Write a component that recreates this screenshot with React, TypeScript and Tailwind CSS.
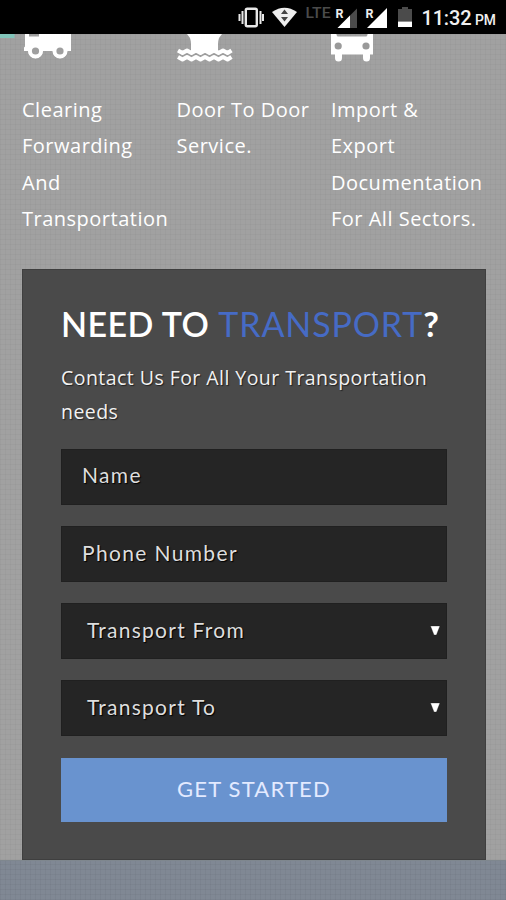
import React from 'react';

const services = [
  { icon: <TruckIcon />, lines: ['Clearing', 'Forwarding', 'And', 'Transportation'] },
  { icon: <ShipIcon />, lines: ['Door To Door', 'Service.'] },
  { icon: <BusIcon />, lines: ['Import &', 'Export', 'Documentation', 'For All Sectors.'] },
];

function TruckIcon() {
  return (
    <svg width="72" height="34" viewBox="0 0 72 34" className="-ml-[22px] block">
      <path fill="#81c4b9" d="M0 0h14.500v4H0z" />
      <path
        fill="#fff"
        fillRule="evenodd"
        d="M25 0h46v17h-3.500a7.500 7.500 0 0 1-15 0h-9.500a7.500 7.500 0 0 1-15 0H24v-3.500l1-1zM29 0v2.500h10V0z"
      />
      <circle cx="35.500" cy="17" r="7.200" fill="#fff" />
      <circle cx="60" cy="17" r="7.200" fill="#fff" />
      <circle cx="35.500" cy="17" r="3.600" fill="#9f9f9f" />
      <circle cx="60" cy="17" r="3.600" fill="#9f9f9f" />
    </svg>
  );
}

function ShipIcon() {
  return (
    <svg width="56" height="34" viewBox="0 0 56 34" className="block">
      <path fill="#fff" d="M10 0h35l-3 4q-1 3-1 6v7H14v-7q0-3-1-6z" />
      <path
        fill="none"
        stroke="#fff"
        strokeWidth="4.200"
        strokeLinejoin="round"
        d="M1 16.500l4.500 2.500 4.500-2.500 4.500 2.500 4.500-2.500 4.500 2.500 4.500-2.500 4.500 2.500 4.500-2.500 4.500 2.500 4.500-2.500 4.500 2.500 4-2.500M1 23l4.500 2.500 4.500-2.500 4.500 2.500 4.500-2.500 4.500 2.500 4.500-2.500 4.500 2.500 4.500-2.500 4.500 2.500 4.500-2.500 4.500 2.500 4-2.500"
      />
    </svg>
  );
}

function BusIcon() {
  return (
    <svg width="43" height="34" viewBox="0 0 43 34" className="block">
      <path
        fill="#fff"
        d="M0 0h5.500v1l1 1.500h29l1-1.500V0H42v20.500h-3V24a3.500 3.500 0 0 1-7 0v-3.500H11V24a3.500 3.500 0 0 1-7 0v-3.500H0z"
      />
      <circle cx="7.200" cy="12" r="3.600" fill="#9a9a9a" />
      <circle cx="35" cy="12" r="3.600" fill="#9a9a9a" />
    </svg>
  );
}

function StatusBar() {
  return (
    <header className="flex h-[34px] shrink-0 bg-black">
      <svg width="506" height="34" viewBox="0 0 506 34" role="img" aria-label="Status">
        <g fill="none" stroke="#e8e8e8">
          <rect x="245.800" y="8.800" width="11" height="17.400" rx="1.500" strokeWidth="2.400" />
          <path strokeWidth="2" d="M242.500 11v13M260.500 11v13M239.500 14v7M263 14v7" />
        </g>
        <path fill="#eee" d="M272 12q12.500-8.500 25 0l-12.500 15z" />
        <path fill="#444" d="m284.500 9.500 3.500 4.500h-7zM281 17h7l-3.500 4.500z" />
        <text x="305.500" y="18" fontSize="14.500" fontWeight="500" fill="#4b4b4b" textLength="25" lengthAdjust="spacingAndGlyphs" className="font-['Roboto']">LTE</text>
        <path fill="#4b4b4b" d="m357 8.500v19.500h-19.500z" />
        <path fill="#fff" d="m350 15.500v12.500h-12.500z" />
        <path fill="#fff" d="m387 8v20h-20z" />
        <g fill="#eee" stroke="#000" strokeWidth="2" paintOrder="stroke" fontSize="12.500" fontWeight="700" className="font-['Roboto']">
          <text x="335.500" y="17.500" textLength="8" lengthAdjust="spacingAndGlyphs">R</text>
          <text x="365.500" y="17.500" textLength="8" lengthAdjust="spacingAndGlyphs">R</text>
        </g>
        <path fill="#4b4b4b" d="M398 9h4V7h6v2h4v12.500h-14z" />
        <path fill="#fff" d="M398 21.500h14V27h-14z" />
        <g fill="#f0f0f0" fontWeight="500" className="font-['Roboto']">
          <text x="421.500" y="25" fontSize="20" textLength="50">11:32</text>
          <text x="475" y="25" fontSize="14" textLength="21" lengthAdjust="spacingAndGlyphs">PM</text>
        </g>
      </svg>
    </header>
  );
}

function Field({ label, select = false }: { label: string; select?: boolean }) {
  return (
    <div
      className={`flex h-[56px] items-center justify-between border border-[#202020] bg-[#252525] pr-[5px] pb-[3px] font-['Lato',sans-serif] text-[21px] text-[#dedede] [text-shadow:1px_1px_1px_#000] ${
        select ? 'pl-[25px] tracking-[1.25px]' : 'pl-[20px] tracking-[1.35px]'
      }`}
    >
      <span>{label}</span>
      {select && (
        <svg width="11" height="11" viewBox="0 0 11 11" className="mt-[2px]">
          <path d="M.5 1h9.400l-3.500 9H4z" fill="#fff" stroke="#111" strokeWidth=".3" />
        </svg>
      )}
    </div>
  );
}

export default function App() {
  return (
    <div className="flex h-[900px] w-[506px] flex-col overflow-hidden bg-[#a1a1a1] font-['Open_Sans',sans-serif]">
      <StatusBar />
      <main className="h-[826px] shrink-0 bg-[#a1a1a1] bg-[repeating-linear-gradient(0deg,#00000007_0_1px,transparent_1px_5px),repeating-linear-gradient(90deg,#00000007_0_1px,transparent_1px_5px)] px-[22px]">
        <section className="grid h-[234.500px] grid-cols-[154.500px_154.500px_154.500px] text-white">
          {services.map((s) => (
            <div key={s.lines[0]}>
              {s.icon}
              <p className="mt-[23.500px] text-[20px] leading-[36.500px] tracking-[0.5px] whitespace-nowrap">
                {s.lines.map((l) => (
                  <span key={l} className="block">{l}</span>
                ))}
              </p>
            </div>
          ))}
        </section>
        <section className="h-[591.500px] w-[464px] border border-[#3f3f3f] bg-[#4a4a4a] pt-[33.500px] pr-[38px] pl-[38px]">
          <h1 className="font-['Lato',sans-serif] text-[34px] leading-[42px] tracking-[0.88px] whitespace-nowrap text-white">
            <span className="font-semibold tracking-[0.45px]">NEED TO </span>
            <span className="text-[#466bc5]">TRANSPORT</span>
            <span className="font-bold">?</span>
          </h1>
          <p className="mt-[16px] text-[19.500px] leading-[33.500px] tracking-[0.45px] whitespace-nowrap text-[#f2f2f2] [text-shadow:1px_1px_1px_#222]">
            Contact Us For All Your Transportation
            <br />
            needs
          </p>
          <form className="mt-[20.500px] flex flex-col gap-[21.300px]">
            <Field label="Name" />
            <Field label="Phone Number" />
            <Field label="Transport From" select />
            <Field label="Transport To" select />
            <button
              type="button"
              className="h-[64px] bg-[#6993cf] pb-[3px] font-['Lato',sans-serif] text-[22px] tracking-[1.2px] text-[#e3eaff]"
            >
              GET STARTED
            </button>
          </form>
        </section>
      </main>
      <footer className="h-[40px] shrink-0 border-t border-[#7f878e] bg-[#808894] bg-[repeating-linear-gradient(0deg,#00000009_0_1px,transparent_1px_5px),repeating-linear-gradient(90deg,#00000009_0_1px,transparent_1px_5px)]" />
    </div>
  );
}
